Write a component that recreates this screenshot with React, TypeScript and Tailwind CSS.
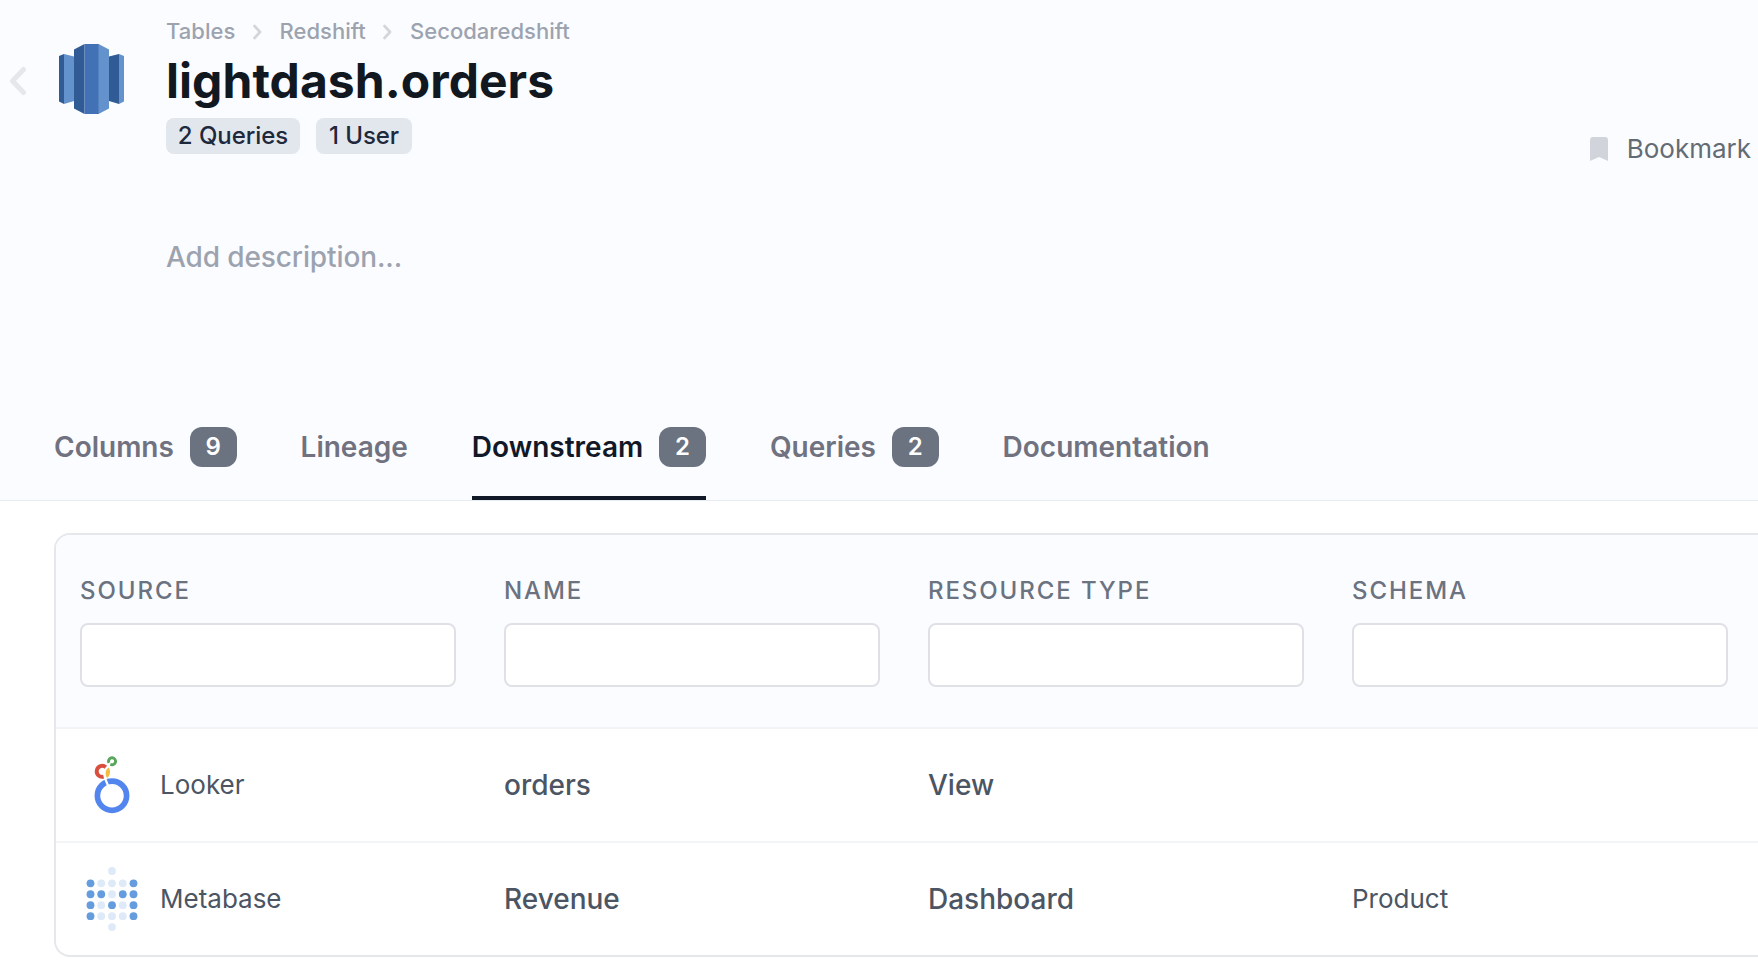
import React from "react";

const RedshiftLogo = () => (
  <svg width="66" height="70" viewBox="0 0 66 70">
    <path fill="#315B94" d="M0 12L5 10V60L0 57.500z" />
    <path fill="#6392CC" d="M5 10L15 12.500V57L5 60z" />
    <path fill="#315B94" d="M15 5.500L25.500 0V70L15 64.500z" />
    <path fill="#4272B5" d="M25.500 0H40V70H25.500z" />
    <path fill="#6392CC" d="M39.500 0L50 5.500V64.500L39.500 70z" />
    <path fill="#315B94" d="M50 12.500L60 10V60L50 57z" />
    <path fill="#6392CC" d="M60 10L65 12V57.500L60 60z" />
  </svg>
);

const LookerLogo = () => (
  <svg width="52" height="64" viewBox="0 0 52 64" fill="none">
    <circle cx="26" cy="42.700" r="14.600" stroke="#5385EE" strokeWidth="5.700" />
    <path d="M18.500 24L22.400 33.500" stroke="#fff" strokeWidth="2.200" />
    <path d="M19.800 14.200A5.500 5.500 0 1 0 17.600 23.700" stroke="#D94F3D" strokeWidth="3.900" />
    <path d="M22.600 14.500C25 17.500 24.300 22.500 21.200 25C18.700 21.500 19 17.200 22.600 14.500z" fill="#F3BD42" />
    <path d="M22.900 9.800A3.500 3.500 0 1 1 26 11.800L24.300 11.300" stroke="#58A65C" strokeWidth="2.900" />
  </svg>
);

const dots = ["00100", "20002", "22022", "20202", "20002", "00100"];

const MetabaseLogo = () => (
  <svg width="52" height="64" viewBox="0 0 52 64">
    {dots.map((row, y) =>
      row.split("").map((v, x) => {
        if ((y === 0 || y === 5) && x !== 2) return null;
        const dark = v === "2";
        return (
          <circle
            key={`${x}-${y}`}
            cx={4.5 + x * 10.75}
            cy={y === 0 ? 4 : 16.300 + (y - 1) * 10.950}
            r="3.900"
            fill={dark ? "#649CDD" : "#DEEAF7"}
          />
        );
      })
    )}
  </svg>
);

const Chevron = () => (
  <svg width="11" height="16" viewBox="0 0 11 16" fill="none" className="mx-[16.6px] mt-[1px]">
    <path d="M2.500 2L8 8L2.500 14" stroke="#D5D6DA" strokeWidth="2.800" strokeLinecap="round" strokeLinejoin="round" />
  </svg>
);

const tabs = [
  { label: "Columns", count: 9 },
  { label: "Lineage" },
  { label: "Downstream", count: 2, active: true },
  { label: "Queries", count: 2 },
  { label: "Documentation" },
];

const rows = [
  { logo: <LookerLogo />, source: "Looker", name: "orders", type: "View", schema: "" },
  { logo: <MetabaseLogo />, source: "Metabase", name: "Revenue", type: "Dashboard", schema: "Product" },
];

export default function App() {
  return (
    <div className="h-[968px] w-full overflow-hidden bg-white font-['Inter',sans-serif]">
      <header className="flex h-[501px] flex-col justify-between border-b border-[#e8ebf0] bg-[#fbfcff]">
        <div className="flex">
          <div className="flex w-[166px] shrink-0 pl-[9px]">
            <svg width="18" height="30" viewBox="0 0 18 30" fill="none" className="mt-[66px]">
              <path d="M14.500 3.500L3.500 15L14.500 26.500" stroke="#E5E7EB" strokeWidth="5" strokeLinecap="round" strokeLinejoin="round" />
            </svg>
            <div className="mt-[44px] ml-8">
              <RedshiftLogo />
            </div>
          </div>
          <div className="flex grow flex-col">
            <nav className="mt-[15px] flex h-8 items-center text-[22px] font-medium tracking-[0.001em] text-[#9ca3af]">
              <span>Tables</span>
              <Chevron />
              <span>Redshift</span>
              <Chevron />
              <span>Secodaredshift</span>
            </nav>
            <h1 className="mt-[4px] text-[48px] leading-[60px] font-bold tracking-[0.001em] text-[#12181f]">lightdash.orders</h1>
            <div className="mt-[7px] flex gap-4 text-[24px] font-medium tracking-[-0.002em] whitespace-nowrap text-[#1e293b]">
              <span className="flex h-9 w-[134px] items-center justify-center rounded-lg bg-[#e2e7ee]">2 Queries</span>
              <span className="flex h-9 w-24 items-center justify-center rounded-lg bg-[#e2e7ee]">1 User</span>
            </div>
            <p className="mt-[83px] text-[28px] leading-10 font-medium tracking-[-0.004em] text-[#9ca3af]">Add description...</p>
          </div>
          <button className="mt-[128px] mr-[7px] flex h-10 items-center gap-[19px] text-[26px] text-[#636b74]">
            <svg width="18" height="24" viewBox="0 0 18 24" className="mt-0.5">
              <path fill="#D1D5DB" d="M3 0H15A3 3 0 0 1 18 3V24L9 20L0 24V3A3 3 0 0 1 3 0z" />
            </svg>
            Bookmark
          </button>
        </div>
        <div className="flex gap-16 pl-[54px] text-[28px] font-semibold text-[#71727f]">
          {tabs.map((t) => (
            <div
              key={t.label}
              className={`flex h-[73px] items-start gap-4 border-b-4 ${t.active ? "border-[#111827] text-[#111827]" : "border-transparent"}`}
            >
              <span className="leading-10">{t.label}</span>
              {t.count && (
                <span className="flex h-10 w-[46.700px] items-center justify-center rounded-xl bg-[#6b7280] text-[24px] text-white">{t.count}</span>
              )}
            </div>
          ))}
        </div>
      </header>

      <section className="mt-8 ml-[54px] w-[1800px] overflow-hidden rounded-2xl border-2 border-[#e5e7eb]">
        <div className="flex h-[194px] border-b-2 border-[#f3f4f6] bg-[#fbfcff] pt-[38px]">
          {["Source", "Name", "Resource type", "Schema"].map((h) => (
            <label key={h} className="flex w-[424px] shrink-0 flex-col gap-[14px] px-6">
              <span className="text-[24px] leading-9 font-medium tracking-[0.08em] text-[#6b7280] uppercase">{h}</span>
              <input className="h-16 w-full rounded-lg border-2 border-[#dfe1e6] bg-white px-4 text-[24px] outline-none" />
            </label>
          ))}
        </div>
        {rows.map((r) => (
          <div key={r.source} className="flex h-[114px] items-center border-b-2 border-[#f3f4f6] text-[28px] font-medium text-[#4b5563] last:h-[112px] last:border-b-0">
            <div className="flex w-[424px] shrink-0 items-center gap-[22px] pl-[30px] text-[26px] font-normal">
              {r.logo}
              <span className="pb-0.5">{r.source}</span>
            </div>
            <span className="w-[424px] shrink-0 px-6">{r.name}</span>
            <span className="w-[424px] shrink-0 px-6">{r.type}</span>
            <span className="w-[424px] shrink-0 px-6 pb-0.5 text-[26px] font-normal">{r.schema}</span>
          </div>
        ))}
      </section>
    </div>
  );
}
